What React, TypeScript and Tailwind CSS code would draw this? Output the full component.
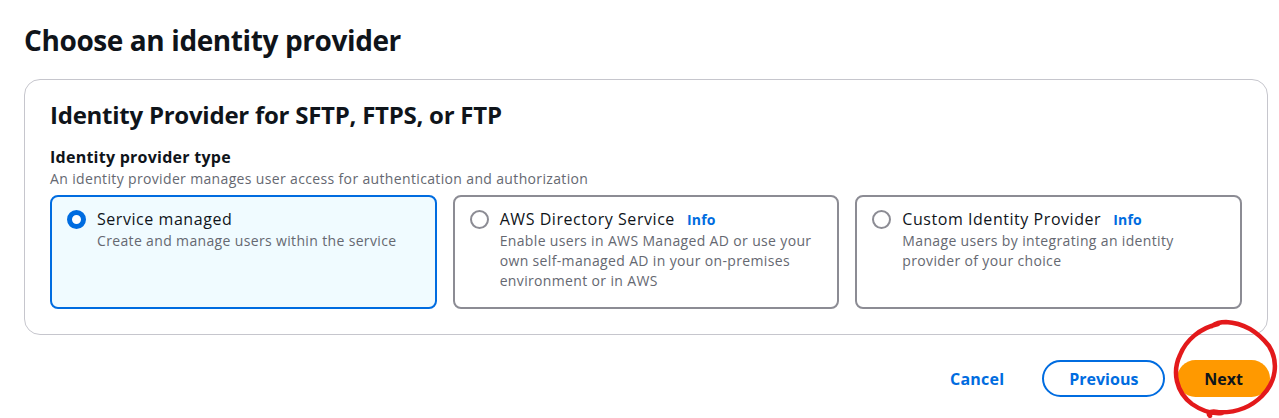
const font = { fontFamily: '"Open Sans", "Noto Sans", sans-serif' };

type Option = {
  title: string;
  lines: string[];
  info?: boolean;
  selected?: boolean;
};

const options: Option[] = [
  {
    title: 'Service managed',
    lines: ['Create and manage users within the service'],
    selected: true,
  },
  {
    title: 'AWS Directory Service',
    lines: [
      'Enable users in AWS Managed AD or use your',
      'own self-managed AD in your on-premises',
      'environment or in AWS',
    ],
    info: true,
  },
  {
    title: 'Custom Identity Provider',
    lines: ['Manage users by integrating an identity', 'provider of your choice'],
    info: true,
  },
];

const Radio = ({ checked }: { checked?: boolean }) =>
  checked ? (
    <span className="mt-[3px] w-[19px] h-[19px] rounded-full border-[5px] border-[#006ce0] bg-white shrink-0" />
  ) : (
    <span className="mt-[3px] w-[19px] h-[19px] rounded-full border-2 border-[#8c8c94] bg-white shrink-0" />
  );

const Tile = ({ option }: { option: Option }) => (
  <div
    className={`flex gap-[11px] rounded-lg border-2 pl-[15px] pr-3 pt-[10px] pb-[16px] ${
      option.selected
        ? 'border-[#006ce0] bg-[#f0fbff]'
        : 'border-[#8c8c94] bg-white'
    }`}
  >
    <Radio checked={option.selected} />
    <div>
      <p className="text-base leading-6 tracking-[0.55px] text-[#0f141a]">
        {option.title}
        {option.info && (
          <span className="ml-3 text-sm font-bold tracking-[0.2px] text-[#006ce0]">Info</span>
        )}
      </p>
      <p className="text-sm leading-5 tracking-[0.35px] text-[#656871]">
        {option.lines.map((line) => (
          <span key={line} className="block">
            {line}
          </span>
        ))}
      </p>
    </div>
  </div>
);

export default function App() {
  return (
    <div className="relative w-[1279px] h-[418px] bg-white overflow-hidden" style={font}>
      <div className="pl-6 pr-[11px] pt-[22px]">
        {/* Header */}
        <h1 className="text-[28px] leading-9 font-bold tracking-[-0.4px] text-[#0f141a] mb-[21px]">
          Choose an identity provider
        </h1>

        {/* Container */}
        <div className="rounded-2xl border border-[#c6c6cd] px-[25px] pt-[19px] pb-[25px]">
          <h2 className="text-2xl leading-8 font-bold tracking-[-0.25px] text-[#0f141a] mb-[14px]">
            Identity Provider for SFTP, FTPS, or FTP
          </h2>
          <p className="text-base leading-6 font-bold tracking-[0.25px] text-[#0f141a]">
            Identity provider type
          </p>
          <p className="text-sm leading-5 tracking-[0.35px] text-[#656871] mb-[6px]">
            An identity provider manages user access for authentication and authorization
          </p>
          <div className="grid grid-cols-3 gap-4">
            {options.map((o) => (
              <Tile key={o.title} option={o} />
            ))}
          </div>
        </div>

        {/* Actions */}
        <div className="flex justify-end items-center gap-3 mt-[25px] -mr-[2px]">
          <button className="pl-5 pr-[26px] h-[37px] rounded-full text-base font-bold tracking-[0.2px] text-[#006ce0]">
            Cancel
          </button>
          <button className="px-[25px] h-[37px] rounded-full border-2 border-[#006ce0] text-base font-bold text-[#006ce0]">
            Previous
          </button>
          <button className="px-[27px] h-[37px] rounded-full bg-[#ff9900] text-base font-bold text-[#0f141a]">
            Next
          </button>
        </div>
      </div>

      {/* Hand-drawn annotation */}
      <svg
        className="absolute left-0 top-0 pointer-events-none"
        width="1279"
        height="418"
        viewBox="0 0 1279 418"
      >
        <path
          d="M1218 324 C1200 328 1186 340 1180 355 C1172 372 1176 392 1192 404 C1202 411 1212 414 1222 413 C1212 410 1206 412 1210 416 M1214 412 C1236 414 1252 406 1262 396 C1276 382 1279 362 1269 346 C1258 332 1244 323 1226 322 C1220 322 1216 323 1212 326"
          fill="none"
          stroke="#e3191b"
          strokeWidth="4.5"
          strokeLinecap="round"
          strokeLinejoin="round"
        />
      </svg>
    </div>
  );
}
